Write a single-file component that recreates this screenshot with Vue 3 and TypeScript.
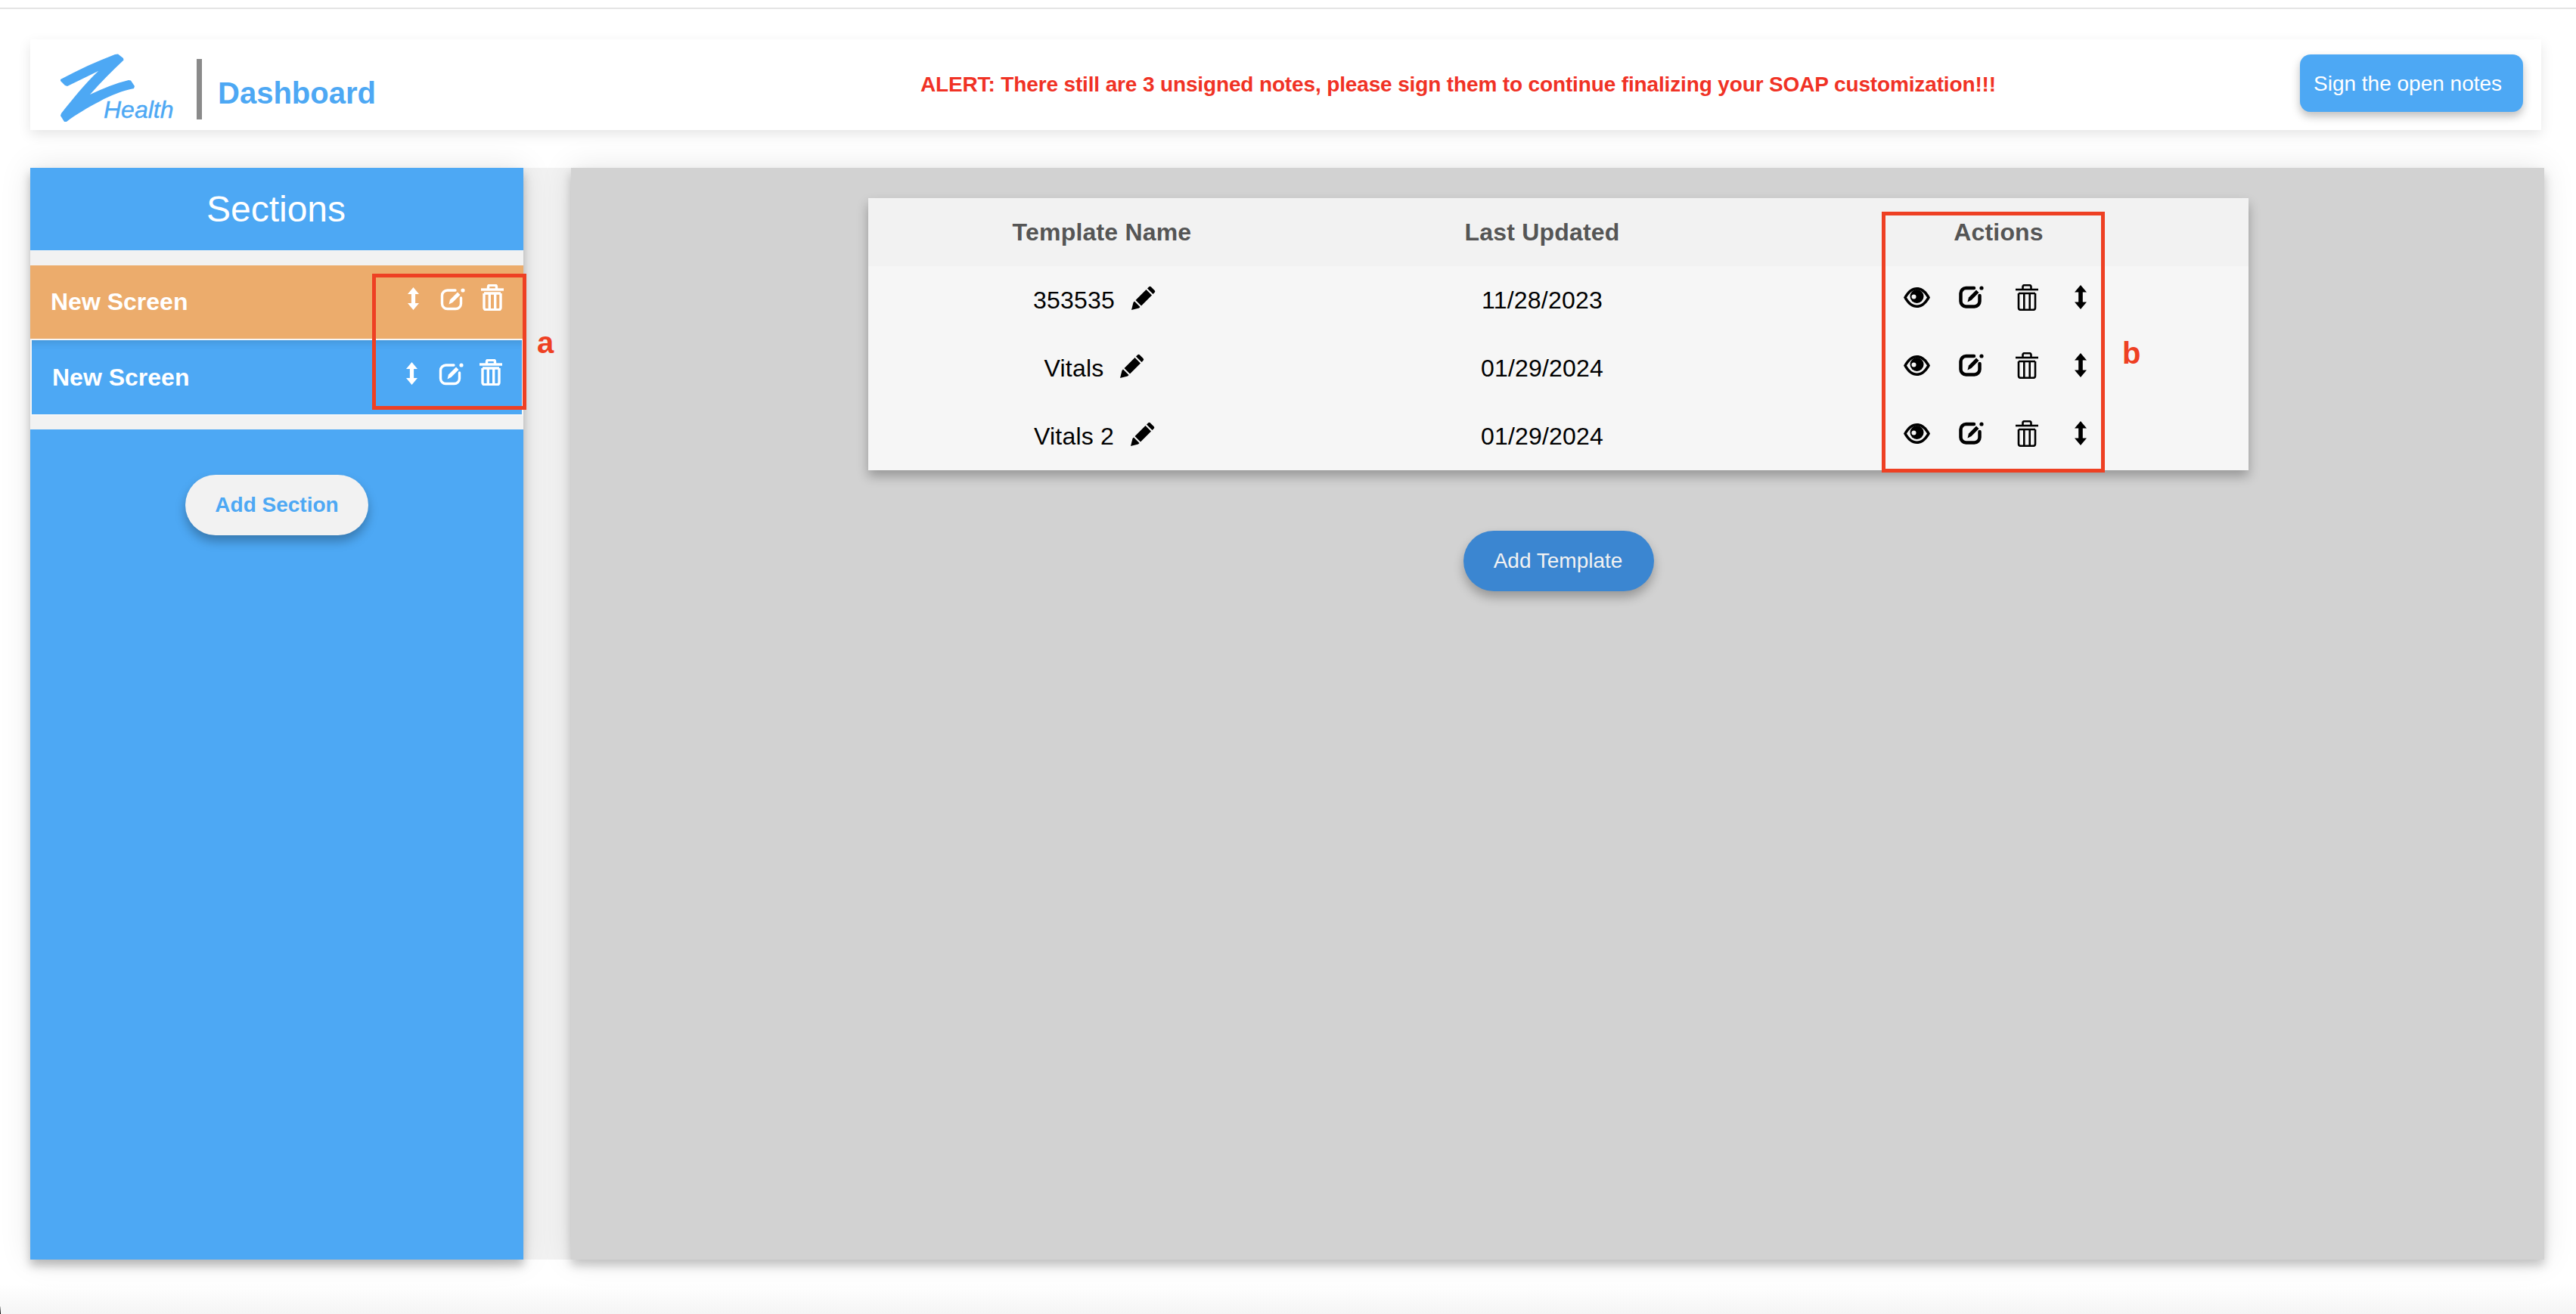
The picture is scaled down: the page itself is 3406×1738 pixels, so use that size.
<script setup lang="ts">
interface TemplateRow {
  name: string
  updated: string
}

const rows: TemplateRow[] = [
  { name: '353535', updated: '11/28/2023' },
  { name: 'Vitals', updated: '01/29/2024' },
  { name: 'Vitals 2', updated: '01/29/2024' },
]

const sections: string[] = ['orange', 'blue']
</script>

<template>
  <div class="page">
    <svg class="defs" aria-hidden="true">
      <defs>
        <symbol id="i-arrow" viewBox="0 0 16 32">
          <path fill="currentColor" d="M8 0 16 9.500H10.800V22.500H16L8 32 0 22.500H5.200V9.500H0Z" />
        </symbol>
        <symbol id="i-edit" viewBox="0 0 33 30">
          <path fill="none" stroke="currentColor" stroke-linecap="round" d="M20 3H9.500A7 7 0 0 0 2.500 10V20.500A7 7 0 0 0 9.500 27.500H20.500A7 7 0 0 0 27.500 20.500V13" />
          <path fill="currentColor" d="M11.500 21.500 13 15.500 23 5.500 26.500 9 16.500 19Z" />
          <circle cx="30" cy="3" r="2.600" fill="currentColor" />
        </symbol>
        <symbol id="i-trash" viewBox="0 0 30 35">
          <g fill="none" stroke="currentColor">
            <path d="M0 7H30" />
            <path d="M9.500 6V3.500A2.300 2.300 0 0 1 11.800 1.200H18.200A2.300 2.300 0 0 1 20.500 3.500V6" />
            <path d="M4 12V31A2.800 2.800 0 0 0 6.800 33.800H23.200A2.800 2.800 0 0 0 26 31V12" />
            <path d="M4 12H26M11.300 12V33M18.700 12V33" />
          </g>
        </symbol>
        <symbol id="i-eye" viewBox="0 0 35 27">
          <path fill="currentColor" d="M0 13.500C5 4 11 0 17.500 0S30 4 35 13.500C30 23 24 27 17.500 27S5 23 0 13.500Z" />
          <path fill="#f6f6f6" d="M4 13.500C8 7 12 3.500 17.500 3.500S27 7 31 13.500C27 20 23 23.500 17.500 23.500S8 20 4 13.500Z" />
          <circle cx="17.500" cy="12" r="9" fill="currentColor" />
          <circle cx="13.500" cy="12.500" r="3" fill="#f6f6f6" />
        </symbol>
        <symbol id="i-pencil" viewBox="0 0 33 32">
          <path fill="currentColor" d="M1 32 3.500 22 5 20.500 12.500 28 11 29.500ZM6.500 19 20.500 5 28 12.500 14 26.500ZM22 3.500 24 1.500Q25.500 0 27 1.500L31.500 6Q33 7.500 31.500 9L29.500 11Z" />
        </symbol>
      </defs>
    </svg>

    <div class="topline"></div>

    <header class="header">
      <div class="logo">
        <svg class="logo-mark" viewBox="0 0 170 105" aria-hidden="true">
          <path fill="#4da8f4" d="M10 40C34 27 58 16 82 7L86 6.500 93 12 93.500 14.500C78 29 63 44 49 60 66 52 83 45 100 41L103 41.500 108 49 107 52C92 55 76 61 62 69 45 78 31 86 18 96L15 96 10 88 11 85C26 66 42 46 60 29L19 49 16 48 10 42Z" />
        </svg>
        <span class="logo-text">Health</span>
      </div>
      <div class="divider"></div>
      <div class="dash">Dashboard</div>
      <div class="alert">ALERT: There still are 3 unsigned notes, please sign them to continue finalizing your SOAP customization!!!</div>
      <button class="sign">Sign the open notes</button>
    </header>

    <main class="content">
      <aside class="sidebar">
        <div class="side-title">Sections</div>
        <div class="side-list">
          <div v-for="s in sections" :key="s" class="row" :class="s">
            <span class="row-name">New Screen</span>
            <div class="row-icons">
              <svg class="ic arrow"><use href="#i-arrow" /></svg>
              <svg class="ic edit thin"><use href="#i-edit" /></svg>
              <svg class="ic trash thin"><use href="#i-trash" /></svg>
            </div>
          </div>
        </div>
        <button class="add-section">Add Section</button>
        <div class="mark-box box-a"></div>
        <span class="mark-letter letter-a">a</span>
      </aside>

      <section class="panel">
        <table class="table">
          <colgroup>
            <col class="c1" />
            <col class="c2" />
            <col />
          </colgroup>
          <thead>
            <tr>
              <th>Template Name</th>
              <th>Last Updated</th>
              <th>Actions</th>
            </tr>
          </thead>
          <tbody>
            <tr v-for="r in rows" :key="r.name">
              <td>
                <span class="name">
                  {{ r.name }}
                  <svg class="ic pencil"><use href="#i-pencil" /></svg>
                </span>
              </td>
              <td>{{ r.updated }}</td>
              <td>
                <div class="actions">
                  <svg class="ic eye"><use href="#i-eye" /></svg>
                  <svg class="ic edit2 thick"><use href="#i-edit" /></svg>
                  <svg class="ic trash2 med"><use href="#i-trash" /></svg>
                  <svg class="ic arrow2"><use href="#i-arrow" /></svg>
                </div>
              </td>
            </tr>
          </tbody>
        </table>
        <button class="add-template">Add Template</button>
        <div class="mark-box box-b"></div>
        <span class="mark-letter letter-b">b</span>
      </section>
    </main>

    <div class="foot"></div>
    <div class="corner"></div>
  </div>
</template>

<style>
html,
body {
  margin: 0;
  background: #fff;
}
</style>

<style scoped>
.page {
  position: relative;
  width: 3406px;
  height: 1738px;
  overflow: hidden;
  padding-top: 10px;
  box-sizing: border-box;
  background: #fff;
  font-family: "Liberation Sans", Arial, sans-serif;
  color: #000;
}
.defs {
  position: absolute;
  width: 0;
  height: 0;
}
.topline {
  height: 2px;
  background: #e4e4e4;
}
.header {
  display: flex;
  align-items: flex-start;
  width: 3320px;
  height: 120px;
  margin: 40px 0 0 40px;
  background: #fff;
  box-shadow: 0 6px 16px rgba(0, 0, 0, 0.1);
  position: relative;
  z-index: 1;
}
.logo {
  position: relative;
  flex: none;
  width: 170px;
  height: 105px;
  margin: 13px 0 0 30px;
}
.logo-mark {
  display: block;
  width: 170px;
  height: 105px;
}
.logo-text {
  position: absolute;
  left: 67px;
  top: 62px;
  font-size: 32px;
  line-height: 36px;
  font-style: italic;
  color: #4da8f4;
  -webkit-text-stroke: 0.4px #4da8f4;
}
.divider {
  flex: none;
  width: 7px;
  height: 80px;
  margin: 26px 0 0 20px;
  background: #8a8a8a;
}
.dash {
  flex: none;
  margin: 48px 0 0 21px;
  font-size: 40px;
  line-height: 46px;
  font-weight: 700;
  color: #4da8f4;
}
.alert {
  flex: none;
  margin: 43px 0 0 720px;
  font-size: 28px;
  line-height: 34px;
  font-weight: 700;
  letter-spacing: -0.14px;
  color: #f03225;
  white-space: nowrap;
}
.sign {
  flex: none;
  margin: 20px 24px 0 auto;
  width: 295px;
  height: 76px;
  padding: 2px 0 0 18px;
  border: 0;
  border-radius: 14px;
  background: #4da8f4;
  color: #fff;
  font: 400 28px "Liberation Sans", Arial, sans-serif;
  text-align: left;
  box-shadow: 0 6px 12px rgba(0, 0, 0, 0.25);
}
.content {
  display: flex;
  gap: 63px;
  width: 3324px;
  height: 1444px;
  margin: 50px 0 0 40px;
  background: #f2f2f2;
  position: relative;
  z-index: 1;
}
.sidebar {
  position: relative;
  flex: none;
  width: 652px;
  background: #4da8f4;
  box-shadow: 0 8px 12px rgba(0, 0, 0, 0.25), 0 0 40px rgba(0, 0, 0, 0.1);
  display: flex;
  flex-direction: column;
  align-items: stretch;
}
.side-title {
  height: 109px;
  font-size: 48px;
  line-height: 110px;
  color: #fff;
  text-align: center;
  margin-left: -2px;
}
.side-list {
  background: #f2f2f2;
  padding: 20px 0 18px;
}
.row {
  display: flex;
  align-items: center;
  box-sizing: border-box;
  color: #fff;
}
.row.orange {
  height: 97px;
  background: #ecac6c;
  position: relative;
  z-index: 1;
}
.row.blue {
  height: 102px;
  background: #4da8f4;
  border: 2px solid #f6f6f6;
  box-shadow: inset 0 12px 10px -8px rgba(0, 0, 0, 0.1);
}
.row-name {
  margin-left: 27px;
  font-size: 32px;
  font-weight: 700;
}
.row-icons {
  display: flex;
  align-items: flex-end;
  align-self: flex-start;
  height: 35px;
  margin: 25px 26px 0 auto;
}
.ic {
  display: block;
  flex: none;
}
.arrow {
  width: 15px;
  height: 32px;
}
.edit {
  width: 33px;
  height: 30px;
  margin-left: 28px;
}
.trash {
  width: 30px;
  height: 35px;
  margin-left: 21px;
}
.thin {
  stroke-width: 3.4;
}
.thick {
  stroke-width: 4.5;
}
.med {
  stroke-width: 2.6;
}
.add-section {
  align-self: center;
  width: 242px;
  height: 80px;
  margin-top: 60px;
  border: 0;
  border-radius: 40px;
  background: #f2f2f2;
  color: #4da8f4;
  font: 700 28px "Liberation Sans", Arial, sans-serif;
  box-shadow: 0 8px 14px rgba(0, 0, 0, 0.28);
}
.mark-box {
  position: absolute;
  box-sizing: border-box;
  border: 5px solid #ee4023;
  z-index: 3;
}
.mark-letter {
  position: absolute;
  font-size: 40px;
  line-height: 40px;
  font-weight: 700;
  color: #ee4023;
  z-index: 3;
}
.box-a {
  left: 452px;
  top: 140px;
  width: 204px;
  height: 180px;
}
.letter-a {
  left: 670px;
  top: 211px;
}
.panel {
  position: relative;
  flex: none;
  width: 2609px;
  background: #d2d2d2;
  box-shadow: 0 8px 12px rgba(0, 0, 0, 0.2), 0 0 40px rgba(0, 0, 0, 0.1);
  display: flex;
  flex-direction: column;
  align-items: flex-start;
}
.table {
  width: 1825px;
  margin: 40px 0 0 393px;
  border-collapse: collapse;
  table-layout: fixed;
  background: #f6f6f6;
  box-shadow: 0 8px 14px rgba(0, 0, 0, 0.28);
}
.c1 {
  width: 618px;
}
.c2 {
  width: 546px;
}
.table th {
  height: 90px;
  padding: 0;
  background: #f2f2f2;
  font-size: 32px;
  font-weight: 700;
  letter-spacing: 0.2px;
  color: #555;
  text-align: center;
}
.table td {
  height: 90px;
  padding: 0;
  font-size: 32px;
  letter-spacing: 0.2px;
  text-align: center;
  color: #000;
}
.name {
  display: inline-flex;
  align-items: center;
  gap: 21px;
  margin-right: 20px;
}
.pencil {
  width: 33px;
  height: 32px;
  margin-top: -6px;
}
.actions {
  display: flex;
  align-items: center;
  padding-left: 205px;
  margin-bottom: 8px;
}
.eye {
  width: 35px;
  height: 27px;
}
.edit2 {
  width: 33px;
  height: 30px;
  margin-left: 38px;
}
.trash2 {
  width: 30px;
  height: 35px;
  margin-left: 42px;
}
.arrow2 {
  width: 16px;
  height: 32px;
  margin-left: 48px;
}
.add-template {
  width: 252px;
  height: 80px;
  margin: 80px 0 0 1180px;
  padding: 0 2px 0 0;
  border: 0;
  border-radius: 40px;
  background: #3b86d1;
  color: #f2f2f2;
  font: 400 28px "Liberation Sans", Arial, sans-serif;
  box-shadow: 0 8px 14px rgba(0, 0, 0, 0.28);
}
.box-b {
  left: 1733px;
  top: 58px;
  width: 295px;
  height: 345px;
}
.letter-b {
  left: 2051px;
  top: 225px;
}
.foot {
  height: 40px;
  margin-top: 32px;
  background: linear-gradient(#fff0, #f5f5f5);
}
.corner {
  position: absolute;
  left: 0;
  bottom: 0;
  width: 1px;
  height: 10px;
  background: linear-gradient(#ccc, #000);
}
</style>
